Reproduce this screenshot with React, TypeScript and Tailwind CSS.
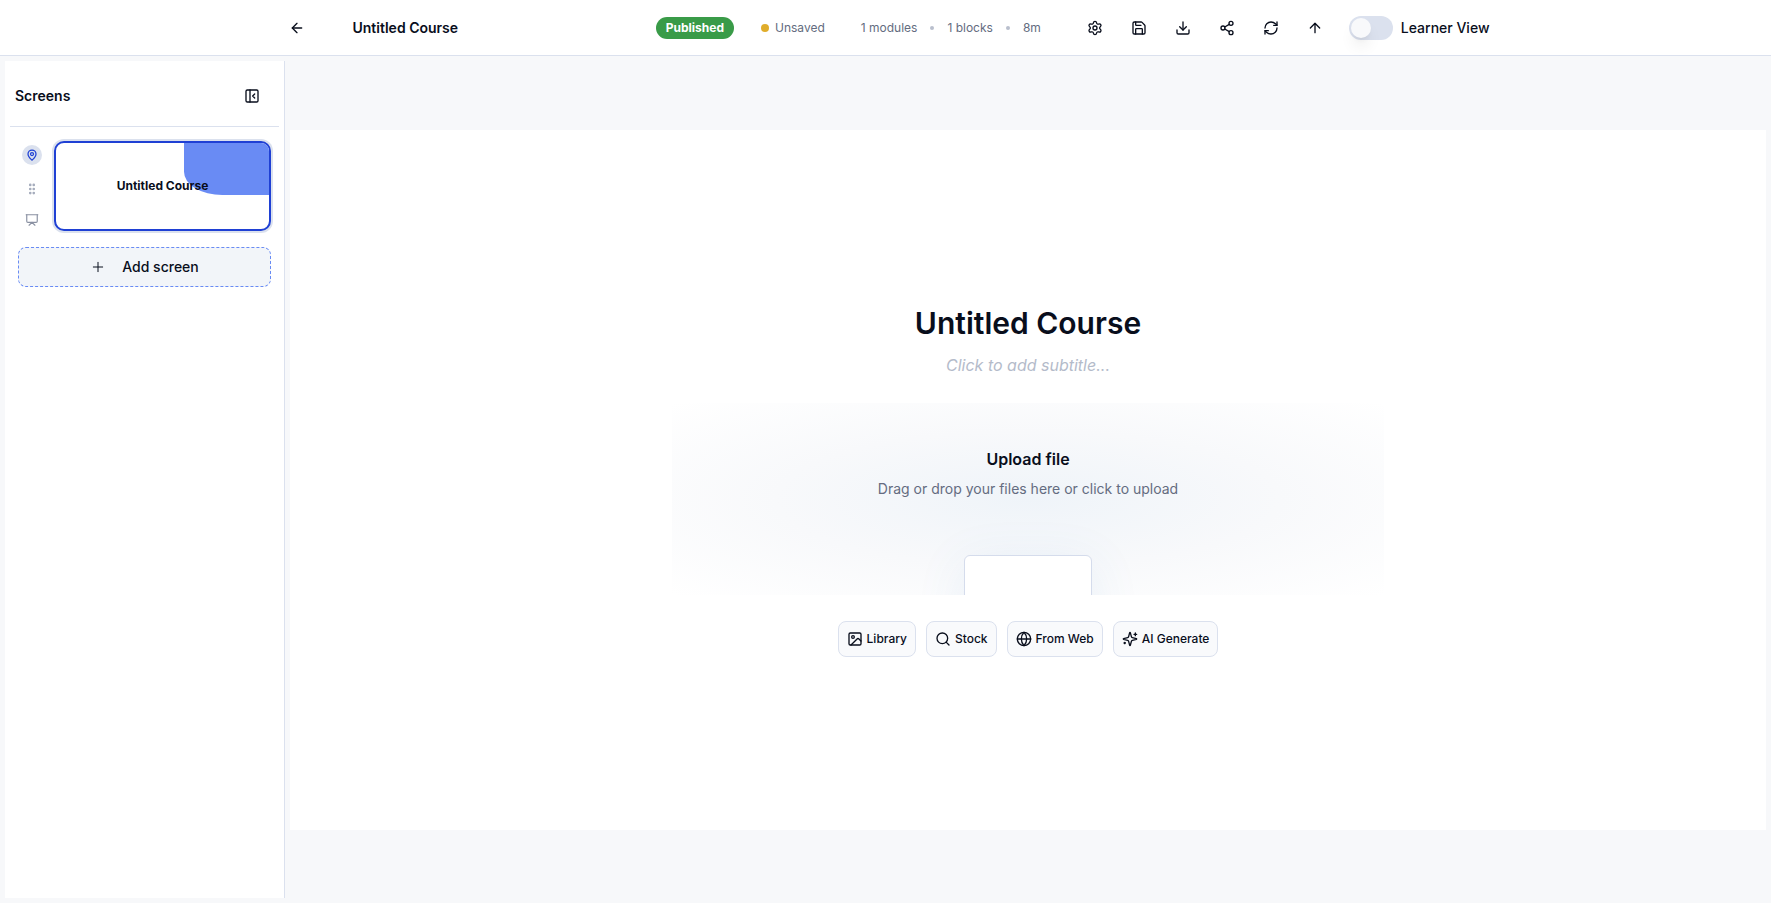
import { useState } from "react";
import {
  ArrowLeft,
  ArrowUp,
  Download,
  Globe,
  GripVertical,
  Image,
  MapPin,
  PanelLeftClose,
  Plus,
  Presentation,
  RefreshCw,
  Save,
  Search,
  Settings,
  Share2,
} from "lucide-react";

const SparklesIcon: React.FC<{ className?: string }> = ({ className }) => (
  <svg
    viewBox="0 0 24 24"
    fill="none"
    stroke="currentColor"
    strokeWidth="2"
    strokeLinecap="round"
    strokeLinejoin="round"
    className={className}
    aria-hidden="true"
  >
    <path d="M9.937 15.5A2 2 0 0 0 8.5 14.063l-6.135-1.582a.5.5 0 0 1 0-.962L8.5 9.936A2 2 0 0 0 9.937 8.5l1.582-6.135a.5.5 0 0 1 .963 0L14.063 8.5A2 2 0 0 0 15.5 9.937l6.135 1.581a.5.5 0 0 1 0 .964L15.5 14.063a2 2 0 0 0-1.437 1.437l-1.582 6.135a.5.5 0 0 1-.963 0z" />
    <path d="M20 3v4" />
    <path d="M22 5h-4" />
    <path d="M4 17v2" />
    <path d="M5 18H3" />
  </svg>
);

const toolbarActions = [
  { label: "Settings", icon: Settings },
  { label: "Save", icon: Save },
  { label: "Download", icon: Download },
  { label: "Share", icon: Share2 },
  { label: "Refresh", icon: RefreshCw },
  { label: "Publish", icon: ArrowUp },
];

const mediaSources = [
  { label: "Library", icon: Image },
  { label: "Stock", icon: Search },
  { label: "From Web", icon: Globe },
  { label: "AI Generate", icon: SparklesIcon },
];

const TopBar: React.FC = () => {
  const [learnerView, setLearnerView] = useState(false);

  return (
    <header className="h-14 shrink-0 border-b border-[#dbe1ee] bg-white">
      <div className="mx-auto flex h-full max-w-7xl items-center pr-9 pl-[31px]">
        <button
          aria-label="Back"
          className="flex size-10 items-center justify-center rounded-md"
        >
          <ArrowLeft className="size-4" />
        </button>
        <h2 className="ml-6 px-3 text-sm font-semibold">Untitled Course</h2>

        <div className="ml-auto flex items-center">
          <span className="rounded-full bg-[#399b48] px-2.5 py-0.5 text-xs leading-[18px] font-bold text-white">
            Published
          </span>
          <div className="ml-[27px] flex items-center gap-1.5 text-xs text-[#646c80]">
            <span className="size-2 rounded-full bg-[#e0ad2b]" />
            Unsaved
          </div>
          <div className="ml-9 flex items-center gap-[13px] text-xs text-[#646c80]">
            <span>1 modules</span>
            <span className="size-1 rounded-full bg-[#b9bfcd]" />
            <span>1 blocks</span>
            <span className="size-1 rounded-full bg-[#b9bfcd]" />
            <span>8m</span>
          </div>
          <div className="ml-9 flex items-center gap-2">
            {toolbarActions.map(({ label, icon: Icon }) => (
              <button
                key={label}
                aria-label={label}
                className="flex size-9 items-center justify-center rounded-md"
              >
                <Icon className="size-4" />
              </button>
            ))}
          </div>
          <button
            id="learner-view"
            role="switch"
            aria-checked={learnerView}
            onClick={() => setLearnerView(!learnerView)}
            className="ml-4 flex h-6 w-11 items-center rounded-full bg-[#dbe1ee] p-0.5"
          >
            <span
              className={`size-5 rounded-full bg-[#f8f9fb] shadow-lg transition-transform ${
                learnerView ? "translate-x-5" : "translate-x-0"
              }`}
            />
          </button>
          <label htmlFor="learner-view" className="ml-2 text-sm font-medium">
            Learner View
          </label>
        </div>
      </div>
    </header>
  );
};

const Sidebar: React.FC = () => {
  return (
    <aside className="w-[280px] shrink-0 border-r border-[#dbe1ee] bg-white px-[5px]">
      <div className="flex h-[66px] items-center justify-between border-b border-[#dbe1ee] pt-1 pr-[9px] pl-[5px]">
        <h2 className="text-sm font-semibold">Screens</h2>
        <button
          aria-label="Collapse sidebar"
          className="flex size-9 items-center justify-center rounded-md"
        >
          <PanelLeftClose className="size-4" />
        </button>
      </div>

      <div className="px-2 pt-3.5">
        <div className="flex gap-3">
          <div className="flex w-6 flex-col items-center pl-1">
            <span className="mt-1 flex size-5 items-center justify-center rounded-full bg-[#dbe1ee] text-[#1f40d4]">
              <MapPin className="size-3" strokeWidth={2.5} />
            </span>
            <GripVertical
              className="mt-[17px] size-3.5 text-[#a4abbb]"
              strokeWidth={2.5}
            />
            <Presentation
              className="mt-[17px] size-3.5 text-[#8a91a2]"
              strokeWidth={2}
            />
          </div>
          <button className="relative flex h-[90px] flex-1 items-center justify-center overflow-hidden rounded-[10px] border-2 border-[#1f40d4] bg-white ring-2 ring-[#dbe1ee]">
            <span className="absolute top-0 right-0 h-3/5 w-2/5 rounded-bl-[45%] bg-[#698bf4]" />
            <span className="relative text-xs font-bold">Untitled Course</span>
          </button>
        </div>

        <button className="mt-4 flex h-10 w-full items-center justify-center gap-4 rounded-lg border border-dashed border-[#698bf4] bg-[#f2f5f9] text-sm font-medium">
          <Plus className="size-4" strokeWidth={1.5} />
          Add screen
        </button>
      </div>
    </aside>
  );
};

const CourseCover: React.FC = () => {
  return (
    <main className="flex min-h-[700px] flex-1 flex-col items-center justify-center self-center bg-white px-8">
      <h1 className="text-3xl leading-10 font-semibold">Untitled Course</h1>
      <p className="mt-2.5 text-base text-[#b4bbca] italic">
        Click to add subtitle...
      </p>

      <button className="relative mt-[26px] flex h-48 w-full max-w-[712px] flex-col items-center overflow-hidden bg-[radial-gradient(ellipse_at_center,#eff4f9_0%,#f8f9fb_50%,#ffffff_100%)] pt-11">
        <span className="text-base font-semibold">Upload file</span>
        <span className="mt-2 text-sm text-[#646c80]">
          Drag or drop your files here or click to upload
        </span>
        <span className="mt-14 h-32 w-32 shrink-0 rounded-md border border-[#d5dcec] bg-white shadow-[0_10px_50px_rgba(59,130,200,0.1)]" />
      </button>

      <div className="mt-[26px] flex gap-2.5">
        {mediaSources.map(({ label, icon: Icon }) => (
          <button
            key={label}
            className="flex h-9 items-center gap-1 rounded-lg border border-[#dbe1ee] bg-[#f9fafc] px-2 text-xs font-medium"
          >
            <Icon className="size-4" />
            {label}
          </button>
        ))}
      </div>
    </main>
  );
};

const App: React.FC = () => {
  return (
    <div className="flex min-h-screen flex-col bg-[#f7f8fa] font-['Inter',sans-serif] text-[#090e1c]">
      <TopBar />
      <div className="flex flex-1 gap-[5px] p-[5px]">
        <Sidebar />
        <CourseCover />
      </div>
    </div>
  );
};

export default App;
